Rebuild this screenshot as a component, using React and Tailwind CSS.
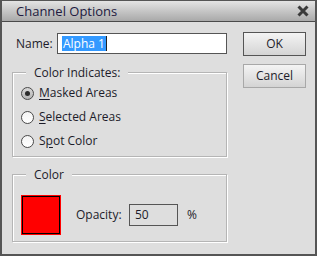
import React from "react";

function Radio({ checked, children }) {
  return (
    <div className="flex items-center h-[24px]">
      <div
        className={
          "w-[13px] h-[13px] rounded-full border border-[#4a4a4a] flex items-center justify-center " +
          (checked
            ? "bg-gradient-to-b from-[#d8d8d8] to-[#b4b4b4]"
            : "bg-gradient-to-b from-[#f4f4f4] to-[#ffffff]")
        }
      >
        {checked && <div className="w-[5px] h-[5px] rounded-full bg-[#2a2a2a]" />}
      </div>
      <span className="ml-[5px]">{children}</span>
    </div>
  );
}

export default function App() {
  return (
    <div className="w-[317px] h-[256px] bg-[#dedede] border-x-2 border-b-2 border-t border-[#555555] flex flex-col font-['Open_Sans',sans-serif] text-[12px] leading-none text-[#1c1c2a] overflow-hidden">
      <div className="h-[21px] shrink-0 border-b border-[#4a4a4a] bg-gradient-to-b from-[#e4e4e4] to-[#a9a9a9] flex items-center justify-between pl-[14px] pr-[4px]">
        <span className="text-[13px] text-[#221a40]">Channel Options</span>
        <svg width="12" height="12" viewBox="0 0 12 12" className="mr-[2px]">
          <path d="M1.5 1.5 L10.5 10.5 M10.5 1.5 L1.5 10.5" stroke="#3a3a3a" strokeWidth="3" strokeLinecap="butt" />
        </svg>
      </div>
      <div className="flex flex-1">
        <div className="pl-[10px] w-[225px] shrink-0">
          <div className="flex items-center pl-[4px] pt-[11px]">
            <span className="w-[41px]">Name:</span>
            <div className="w-[170px] h-[21px] border border-[#555555] bg-white flex items-center pl-[4px]">
              <span className="bg-[#3399ff] text-white h-[15px] flex items-center px-[1px]">Alpha 1</span>
              <span className="w-[1px] h-[15px] bg-[#222]" />
            </div>
          </div>
          <div className="relative mt-[18px] w-[215px] h-[85px] border border-[#b5b5b5] shadow-[1px_1px_0_#ffffff,inset_1px_1px_0_#ffffff] pt-[8px] pl-[8px]">
            <span className="absolute left-[13px] top-[-6px] px-[8px] bg-[#dedede]">Color Indicates:</span>
            <Radio checked>
              <span className="underline underline-offset-2">M</span>asked Areas
            </Radio>
            <Radio>
              <span className="underline underline-offset-2">S</span>elected Areas
            </Radio>
            <Radio>
              S<span className="underline underline-offset-2">p</span>ot Color
            </Radio>
          </div>
          <div className="relative mt-[17px] w-[215px] h-[68px] border border-[#b5b5b5] shadow-[1px_1px_0_#ffffff,inset_1px_1px_0_#ffffff] pt-[20px] pl-[8px] flex items-start">
            <span className="absolute left-[13px] top-[-6px] px-[8px] bg-[#dedede]">Color</span>
            <div className="flex items-center">
              <div className="w-[40px] h-[40px] border border-[#ff0000] bg-[#ff0000] shadow-[inset_0_0_0_1px_#000000]" />
              <span className="ml-[15px] w-[53px]">Opacity:</span>
              <div className="w-[49px] h-[22px] border border-[#555555] flex items-center pl-[5px]">50</div>
              <span className="ml-[9px]">%</span>
            </div>
          </div>
        </div>
        <div className="ml-[16px] pt-[10px] flex flex-col gap-[8px]">
          <button className="w-[63px] h-[24px] border border-[#555555] bg-gradient-to-b from-[#f4f4f4] to-[#d4d4d4] flex items-center justify-center">OK</button>
          <button className="w-[63px] h-[24px] border border-[#a8a8a8] bg-gradient-to-b from-[#f4f4f4] to-[#d4d4d4] flex items-center justify-center">Cancel</button>
        </div>
      </div>
    </div>
  );
}
